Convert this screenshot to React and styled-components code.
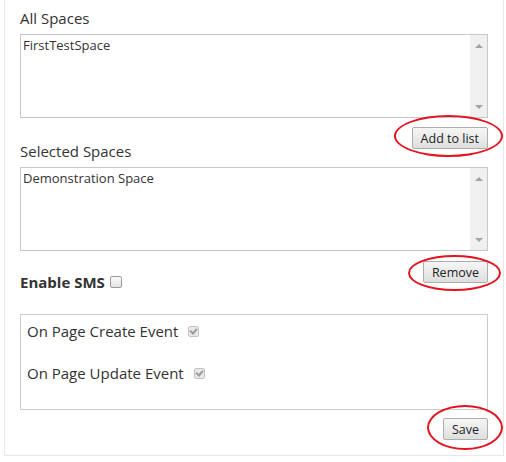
import styled, { createGlobalStyle } from 'styled-components';

const GlobalStyle = createGlobalStyle`
  html, body {
    margin: 0;
    padding: 0;
    background: #fff;
  }
  body {
    font-family: "Open Sans", "Noto Sans", sans-serif;
    color: #333;
  }
`;

export default function App() {
  return (
    <>
      <GlobalStyle />
      <Panel>
        <Label>All Spaces</Label>
        <ListBox>
          <Items>
            <Item>FirstTestSpace</Item>
          </Items>
          <Scrollbar>
            <Arrow $dir="up" />
            <Arrow $dir="down" />
          </Scrollbar>
        </ListBox>
        <ButtonRow $top={9} $bottom={-8}>
          <Marked>
            <Button>Add to list</Button>
            <Ring $l={-18} $r={-15} $t={-12} $b={-8} />
          </Marked>
        </ButtonRow>

        <Label>Selected Spaces</Label>
        <ListBox>
          <Items>
            <Item>Demonstration Space</Item>
          </Items>
          <Scrollbar>
            <Arrow $dir="up" />
            <Arrow $dir="down" />
          </Scrollbar>
        </ListBox>
        <ButtonRow $top={10} $bottom={-11}>
          <Marked>
            <Button>Remove</Button>
            <Ring $l={-15} $r={-13} $t={-6} $b={-8} />
          </Marked>
        </ButtonRow>

        <SmsRow>
          <strong>Enable SMS</strong>
          <Check />
        </SmsRow>

        <EventBox>
          <EventRow>
            On Page Create Event
            <Check $checked />
          </EventRow>
          <EventRow>
            On Page Update Event
            <Check $checked />
          </EventRow>
        </EventBox>

        <ButtonRow $top={8} $bottom={0}>
          <Marked>
            <Button>Save</Button>
            <Ring $l={-16} $r={-15} $t={-13} $b={-10} />
          </Marked>
        </ButtonRow>
      </Panel>
    </>
  );
}

const Panel = styled.div`
  box-sizing: border-box;
  width: 500px;
  margin-left: 4px;
  padding: 8px 15px 15px;
  border: 1px solid #e8e8e8;
  border-top: none;
`;

const Label = styled.div`
  font-size: 15px;
  line-height: 20px;
  color: #333;
  margin-bottom: 6px;
`;

const ListBox = styled.div`
  box-sizing: border-box;
  display: flex;
  height: 84px;
  border: 1px solid #c8c8c8;
  background: #fff;
`;

const Items = styled.div`
  flex: 1;
  padding: 2px 2px;
`;

const Item = styled.div`
  font-size: 13px;
  line-height: 16px;
  color: #333;
`;

const Scrollbar = styled.div`
  width: 17px;
  background: #f0f0f0;
  display: flex;
  flex-direction: column;
  justify-content: space-between;
  align-items: center;
  padding: 9px 0 8px;
`;

const Arrow = styled.span`
  width: 0;
  height: 0;
  border-left: 4px solid transparent;
  border-right: 4px solid transparent;
  ${(p) =>
    p.$dir === 'up'
      ? 'border-bottom: 4px solid #a3a3a3;'
      : 'border-top: 4px solid #a3a3a3;'}
`;

const ButtonRow = styled.div`
  display: flex;
  justify-content: flex-end;
  margin-top: ${(p) => p.$top}px;
  margin-bottom: ${(p) => p.$bottom}px;
`;

const Marked = styled.div`
  position: relative;
  display: flex;
`;

const Button = styled.button`
  box-sizing: border-box;
  height: 22px;
  padding: 0 8px;
  font-family: "Open Sans", "Noto Sans", sans-serif;
  font-size: 12.5px;
  color: #222;
  background: linear-gradient(#f6f6f6, #dedede);
  border: 1px solid #adadad;
  border-radius: 2px;
`;

const Ring = styled.span`
  position: absolute;
  left: ${(p) => p.$l}px;
  right: ${(p) => p.$r}px;
  top: ${(p) => p.$t}px;
  bottom: ${(p) => p.$b}px;
  border: 2.5px solid #e3141f;
  border-radius: 50%;
  pointer-events: none;
`;

const SmsRow = styled.div`
  display: flex;
  align-items: center;
  gap: 5px;
  font-size: 15px;
  line-height: 20px;
  color: #333;
  margin-bottom: 22px;
`;

const Check = styled.span`
  box-sizing: border-box;
  position: relative;
  display: inline-block;
  width: ${(p) => (p.$checked ? 11 : 12)}px;
  height: ${(p) => (p.$checked ? 11 : 12)}px;
  border: 1px solid ${(p) => (p.$checked ? '#c4c4c4' : '#9a9a9a')};
  border-radius: 2px;
  background: ${(p) =>
    p.$checked ? '#e8e8e8' : 'linear-gradient(#fcfcfc, #e2e2e2)'};
  margin-left: ${(p) => (p.$checked ? 10 : 0)}px;
  ${(p) =>
    p.$checked &&
    `
    &::after {
      content: "";
      position: absolute;
      left: 2px;
      top: 0px;
      width: 3px;
      height: 5px;
      border: solid #9b9b9b;
      border-width: 0 2px 2px 0;
      transform: rotate(40deg);
    }
  `}
`;

const EventBox = styled.div`
  box-sizing: border-box;
  height: 96px;
  border: 1px solid #cccccc;
  padding: 6px 6px;
  display: flex;
  flex-direction: column;
  gap: 22px;
`;

const EventRow = styled.div`
  display: flex;
  align-items: center;
  font-size: 15px;
  line-height: 20px;
  color: #333;
`;
